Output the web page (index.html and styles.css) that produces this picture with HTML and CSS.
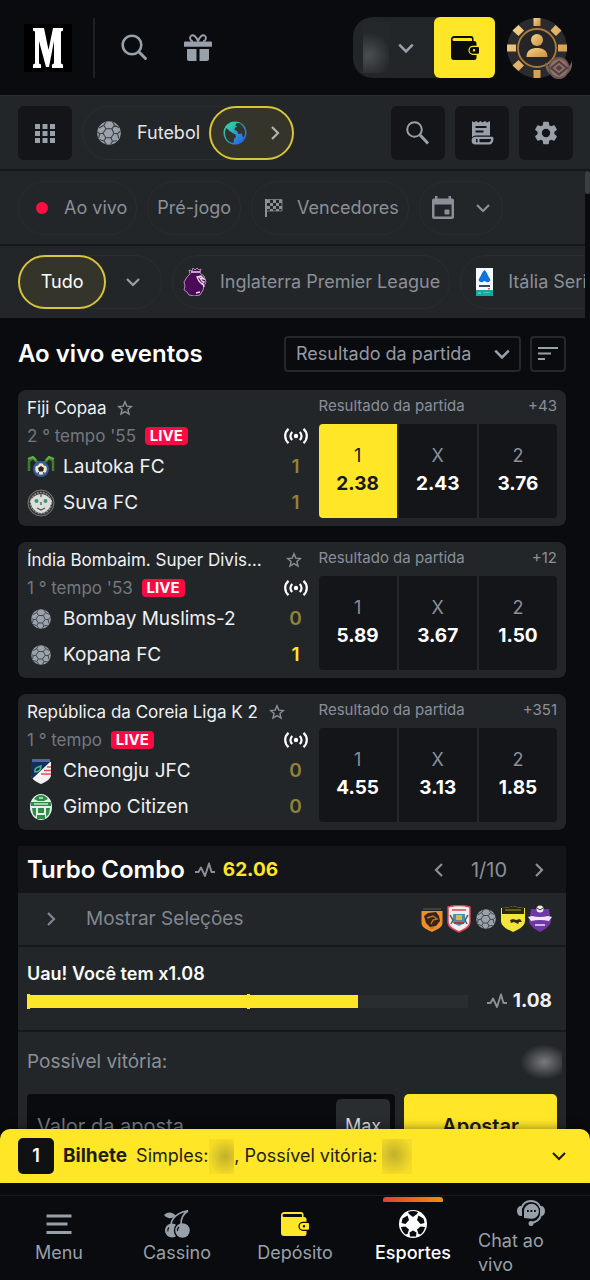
FILE: index.html
```html
<!DOCTYPE html>
<html lang="pt">
<head>
<meta charset="utf-8">
<meta name="viewport" content="width=device-width, initial-scale=1">
<title>Esportes - Ao vivo eventos</title>
<link rel="stylesheet" href="styles.css">
</head>
<body>
<svg class="defs" aria-hidden="true">
  <defs>
    <linearGradient id="gold" x1="0" y1="0" x2="1" y2="1"><stop offset="0" stop-color="#f6d58a"/><stop offset="1" stop-color="#c98e3e"/></linearGradient>
    <linearGradient id="earth" x1="0" y1="0" x2="1" y2="1"><stop offset="0" stop-color="#3fe08a"/><stop offset=".45" stop-color="#2aa9c8"/><stop offset="1" stop-color="#2a4cf0"/></linearGradient>
  </defs>
  <symbol id="down" viewBox="0 0 16 16"><path d="M2 5l6 6 6-6" fill="none" stroke="currentColor" stroke-width="2.200"/></symbol>
  <symbol id="right" viewBox="0 0 16 16"><path d="M5 2l6 6-6 6" fill="none" stroke="currentColor" stroke-width="2.200"/></symbol>
  <symbol id="left" viewBox="0 0 16 16"><path d="M11 2L5 8l6 6" fill="none" stroke="currentColor" stroke-width="2.200"/></symbol>
  <symbol id="star" viewBox="0 0 16 16"><path d="M8 1.800l1.800 4.300 4.600.4-3.500 3 1.100 4.500L8 11.600 4 14l1.100-4.500-3.500-3 4.600-.4z" fill="none" stroke="currentColor" stroke-width="1.400"/></symbol>
  <symbol id="ball" viewBox="0 0 24 24">
    <circle cx="12" cy="12" r="11.800" fill="#9ba2ac"/>
    <g fill="none" stroke="#3b4046" stroke-width="1.100" stroke-linejoin="round">
      <path d="M9 7.800h5.800l2.200 4.700-3.200 4.300H8.800l-2.900-4.600z"/>
      <path d="M9 7.800L6.800 4.300 2 7M6.800 4.300L9 .8M14.800 7.800l2.700-3.500L15.500 1M17.500 4.300l4.700 2.500M17 12.500l3.500.1 3-2.600M20.500 12.600l1.300 5M13.800 16.800l1.700 3.400 4.500-.4M15.500 20.200l-2 3.300M8.800 16.800l-1.900 3.200-4.400-1.500M6.900 20l2.500 3.300M5.900 12.200l-3.300.7L.4 10.500M2.600 12.900L1.800 17"/>
    </g>
  </symbol>
  <symbol id="cast" viewBox="0 0 24 16">
    <circle cx="12" cy="8" r="2.200" fill="currentColor"/>
    <path d="M8.300 4a5.200 5.200 0 0 0 0 8M15.700 4a5.200 5.200 0 0 1 0 8M4.500 .8a9.500 9.500 0 0 0 0 14.400M19.500 .8a9.500 9.500 0 0 1 0 14.400" fill="none" stroke="currentColor" stroke-width="2.200"/>
  </symbol>
  <symbol id="pulse" viewBox="0 0 20 16"><path d="M0 10h3.500L6 5.500l4 8.500L14 1.500 16.500 10H20" fill="none" stroke="currentColor" stroke-width="1.900" stroke-linejoin="round"/></symbol>
  <symbol id="wallet" viewBox="0 0 28 24">
    <path fill="currentColor" fill-rule="evenodd" d="M3.500 0H20a2.500 2.500 0 0 1 2.500 2.500V5H23a2.500 2.500 0 0 1 2.500 2.500v2.200H22a4.600 4.600 0 0 0 0 9.200h3.500v2.600A2.500 2.500 0 0 1 23 24H3a3 3 0 0 1-3-3V3.500A3.500 3.500 0 0 1 3.500 0zM3 2a1.500 1.500 0 0 0 0 3h18V3a1 1 0 0 0-1-1z"/>
    <path fill="currentColor" fill-rule="evenodd" d="M22 10.900h5a1 1 0 0 1 1 1v4.800a1 1 0 0 1-1 1h-5a3.400 3.400 0 0 1 0-6.800zm1 2.200a1.200 1.200 0 1 0 0 2.400 1.200 1.200 0 0 0 0-2.400z"/>
  </symbol>
</svg>

<div class="app">
  <header class="top">
    <a class="logo" href="#" aria-label="Início">
      <svg viewBox="0 0 48 48"><rect width="48" height="48" fill="#000"/><path fill="#fff" d="M9 4h11l4.500 22L29 4h10v2.500l-2 1v32l2 1V44H28v-3.500l2-1V17l-5 26h-3L15 17v22.500l2 1V44H9v-3.500l2-1v-32l-2-1z"/></svg>
    </a>
    <span class="rule"></span>
    <button class="bare" aria-label="Buscar"><svg class="i28" viewBox="0 0 28 28"><circle cx="12" cy="11" r="9.300" fill="none" stroke="currentColor" stroke-width="2.600"/><path d="M19 18l6.500 6.500" stroke="currentColor" stroke-width="3" stroke-linecap="round"/></svg></button>
    <button class="bare gift" aria-label="Promoções"><svg class="i28" viewBox="0 0 28 28"><path fill="currentColor" d="M0 8.500a1 1 0 0 1 1-1h26a1 1 0 0 1 1 1v4.200H0zM3 15h9.500v12H5a2 2 0 0 1-2-2zM15.500 15H25v10a2 2 0 0 1-2 2h-7.500z"/><path fill="none" stroke="currentColor" stroke-width="1.900" d="M14 7.500C12.500 2.500 9.500.7 7.600 1.500 5 2.700 6 7 9 7.500M14 7.500c1.500-5 4.500-6.800 6.400-6C23 2.700 22 7 19 7.500"/></svg></button>
    <div class="account">
      <button class="balance" aria-label="Saldo"><span class="smudge"></span><svg class="i18" aria-hidden="true"><use href="#down"/></svg></button>
      <button class="deposit" aria-label="Depositar"><svg viewBox="0 0 28 24"><use href="#wallet"/></svg></button>
    </div>
    <button class="avatar" aria-label="Perfil">
      <svg viewBox="0 0 66 64">
        <circle cx="31" cy="31" r="30" fill="#2b2b2d"/>
        <g fill="url(#gold)">
          <path d="M27.500 1h7v8h-7z"/>
          <path d="M27.500 53h7v8h-7zM1 27.500h9v7H1zM52 27.500h9v7h-9zM6.500 13.500L12.500 8l5.500 5.500-5.500 5.500zM49.500 8l6 5.500-5.500 5.500-5.500-5.500zM12.500 54l-6-5.500 6-5.500 5.500 5.500z"/>
        </g>
        <circle cx="31" cy="31" r="19" fill="#252527" stroke="#a97c3c" stroke-width="1.800"/>
        <circle cx="31" cy="23" r="6" fill="url(#gold)"/>
        <path d="M20.500 40c0-7 5-9 10.500-9s10.500 2 10.500 9z" fill="url(#gold)"/>
        <path d="M39 45c2 4 4 4 4 4s1-9 10-9 10 9 10 9 2-1 3-6c1 9-3 13-5 14-2 4-5 5-8 5s-6-1-8-4c-4-3-6-7-6-13z" fill="#79605b"/>
        <circle cx="53" cy="51" r="10.500" fill="#6a514e"/><circle cx="53" cy="51" r="9" fill="#8d716b"/>
        <path d="M53 44.500l8 6.500-8 6.500-8-6.500z" fill="none" stroke="#543f3e" stroke-width="2"/><path d="M53 48l3.500 3-3.500 3-3.500-3z" fill="#543f3e"/>
      </svg>
    </button>
  </header>

  <nav class="sports" aria-label="Modalidades">
    <button class="tile" aria-label="Todos"><svg class="i20" viewBox="0 0 20 20"><path fill="currentColor" d="M0 1h5v5H0zM7.500 1h5v5h-5zM15 1h5v5h-5zM0 8h5v5H0zM7.500 8h5v5h-5zM15 8h5v5h-5zM0 15h5v5H0zM7.500 15h5v5h-5zM15 15h5v5h-5z"/></svg></button>
    <div class="pill combo-pill">
      <button class="sport"><svg class="i24"><use href="#ball"/></svg>Futebol</button>
      <button class="region active" aria-label="Região"><svg class="i24" viewBox="0 0 24 24"><circle cx="12" cy="12" r="11.500" fill="url(#earth)"/><path fill="#35342a" d="M13 2.500c2-1 3.500-.500 5 .8 2.500 2 4 5 4 8.200 0 2-.6 3.800-1.600 5.300l-1.900-4.300-3 .5-1.500-3-2.500-1 .5-2.500 2.500-.5-2-1.500zM3.500 7l2.500 2.500L9.500 12l3 1.500.5 2.500-2 2-.5 4C5.500 21.500 2 17.500 2 12c0-1.900.6-3.600 1.500-5z"/></svg><svg class="i16"><use href="#right"/></svg></button>
    </div>
    <div class="tools">
      <button class="tile" aria-label="Pesquisar"><svg class="i24" viewBox="0 0 24 24"><circle cx="8.500" cy="8.500" r="7.300" fill="none" stroke="currentColor" stroke-width="2"/><path d="M14 14l8 8.500" stroke="currentColor" stroke-width="3"/></svg></button>
      <button class="tile" aria-label="Apostas"><svg class="i24" viewBox="0 0 24 24"><path fill="currentColor" fill-rule="evenodd" d="M2 0l2 1.500L6 0l2.300 1.500L10.500 0l2 1.500L15 0l2 1.500L20 0v14.500H5.500A4 4 0 0 0 2 16.500zM5.500 5v1.900h11V5zm0 4.500v1.900h8V9.500z"/><path fill="currentColor" fill-rule="evenodd" d="M5.500 15.700H22a1.500 1.500 0 0 1 1.500 1.500c0 3.800-1.500 6.300-4.500 6.300H5.500a3.900 3.900 0 0 1 0-7.800zM6 18v3.200h1.500V18zm3.500 0v3.200H19c1.300 0 2-1.500 2-3.200z"/></svg></button>
      <button class="tile" aria-label="Configurações"><svg class="i28" viewBox="0 0 24 24"><path fill="currentColor" d="M19.140 12.940c.040-.300.060-.610.060-.940 0-.320-.020-.640-.070-.940l2.030-1.580c.180-.140.230-.410.120-.610l-1.920-3.320c-.120-.220-.370-.290-.590-.220l-2.390.960c-.500-.380-1.030-.700-1.620-.940l-.360-2.540c-.040-.240-.240-.410-.480-.410h-3.840c-.240 0-.430.170-.470.410l-.360 2.540c-.590.240-1.130.570-1.620.940l-2.390-.960c-.220-.080-.470 0-.590.220L2.740 8.870c-.120.210-.080.470.120.610l2.030 1.580c-.050.300-.090.630-.090.940s.020.640.070.940l-2.030 1.580c-.180.140-.230.410-.120.610l1.920 3.320c.120.220.370.290.590.220l2.390-.960c.500.380 1.030.700 1.620.940l.360 2.540c.050.240.240.410.480.410h3.840c.240 0 .440-.170.470-.410l.360-2.540c.590-.240 1.130-.560 1.620-.940l2.390.960c.220.080.470 0 .590-.220l1.920-3.320c.120-.220.070-.470-.120-.610l-2.010-1.580zM12 15.600A3.600 3.600 0 1 1 12 8.400a3.600 3.600 0 0 1 0 7.200z"/></svg></button>
    </div>
  </nav>

  <main class="scroll">
    <span class="thumb"></span>
    <div class="filters">
      <button class="pill"><span class="dot"></span><span>Ao vivo</span></button>
      <button class="pill">Pré-jogo</button>
      <button class="pill flagpill"><svg class="i20" viewBox="0 0 20 20"><path fill="currentColor" d="M1 1h2v18H1zM3 2h3v3H3zM9 2h3v3H9zM15 2h3v3h-3zM6 5h3v3H6zM12 5h3v3h-3zM3 8h3v3H3zM9 8h3v3H9zM15 8h3v3h-3zM6 11h3v2H6zM12 11h3v2h-3z"/><path fill="none" stroke="currentColor" stroke-width=".8" d="M3 1.500h15v11.500H3"/></svg>Vencedores</button>
      <button class="pill calpill" aria-label="Data"><svg class="i24" viewBox="0 0 24 24"><path fill="currentColor" fill-rule="evenodd" d="M4 0h2.500v2.500h11V0H20v2.500h1a2 2 0 0 1 2 2V21a2 2 0 0 1-2 2H3a2 2 0 0 1-2-2V4.500a2 2 0 0 1 2-2h1zM3.500 8.500V20.500h17v-12z"/><rect x="13.500" y="13.500" width="5" height="5" rx="1" fill="currentColor"/></svg><svg class="i16"><use href="#down"/></svg></button>
    </div>
    <div class="filters leagues">
      <div class="pill all-pill"><button class="all active">Tudo</button><button class="more" aria-label="Mais"><svg class="i16"><use href="#down"/></svg></button></div>
      <button class="pill league"><svg class="i28" viewBox="0 0 28 28"><path d="M7 6l-1-4 3 1 1-3 2 2 2-2 2 2 2-1-1 4 4 3 2 6-2 4-1 4-3 5-6 1-5-1-2-3-3-2 1-4-1-4 3-5z" fill="#4b0a58" stroke="#b99bc0" stroke-width=".9"/><path d="M8 4h9M14 9l4-1 3 3-4-1 2 3 2 1-2 2-3-3zM20 16l1 3M13 25l4-1" fill="none" stroke="#ecd7ee" stroke-width="1.300"/></svg>Inglaterra Premier League</button>
      <button class="pill league"><svg class="i28" viewBox="0 0 28 28"><path fill="#f7fafc" d="M5 0h17v28H5z"/><path fill="#1172dc" d="M13.500 2c3 3 3 5 5 8 2 2 0 5-3 4l-2-1-2 1c-3 1-5-2-3-4 2-3 2-5 5-8z"/><path fill="#2c4a70" d="M8 17h11v2H8z"/><path fill="#18a7a3" d="M5 22h17v6H5z"/><path fill="#45c9b5" d="M7 24h3v2H7zm5 0h7v1h-7z"/><path fill="#e35b62" d="M17 20h2v1.500h-2z"/></svg>Itália Serie A</button>
    </div>

    <div class="content">
      <div class="heading">
        <h1>Ao vivo eventos</h1>
        <label class="market"><select aria-label="Mercado"><option>Resultado da partida</option></select><svg class="i18"><use href="#down"/></svg></label>
        <button class="sort" aria-label="Ordenar"><svg class="i20" viewBox="0 0 20 20"><path d="M0 4h20M0 9.500h13M0 15h7" stroke="currentColor" stroke-width="2.200"/></svg></button>
      </div>

      <article class="card">
        <div class="match">
          <div class="line name"><h2>Fiji Copaa</h2><button class="fav" aria-label="Favorito"><svg class="i16"><use href="#star"/></svg></button></div>
          <div class="line time">2 ° tempo '55 <b class="live">LIVE</b><svg class="cast"><use href="#cast"/></svg></div>
          <div class="team"><svg class="i28" viewBox="0 0 28 28"><path d="M2 18V8l4-3 5 5M26 18V8l-4-3-5 5" fill="none" stroke="#3d7d2c" stroke-width="2.500"/><path d="M1 6l5-2 3 3M27 6l-5-2-3 3" fill="none" stroke="#63ad42" stroke-width="2"/><circle cx="14" cy="16" r="8" fill="#315d9b"/><circle cx="14" cy="16" r="5.800" fill="#eee9d2"/><path d="M14 13l3 2-1 3.500h-4L11 15zM9 13l2-2 1 1zM19 13l-2-2-1 1zM10 20l2-1v2zM18 20l-2-1v2z" fill="#252525"/></svg><span>Lautoka FC</span><b class="dim">1</b></div>
          <div class="team"><svg class="i28" viewBox="0 0 28 28"><circle cx="14" cy="14" r="13" fill="#333536" stroke="#777" stroke-width="1"/><circle cx="14" cy="14" r="10.500" fill="none" stroke="#8a8a88" stroke-width="1.500" stroke-dasharray="2 1"/><path d="M3 12q5-7 11-7t11 7l-2 6q-4 6-9 6t-9-6z" fill="#dcdedb"/><circle cx="9.500" cy="12" r="2" fill="#3b9a6c"/><circle cx="18.500" cy="12" r="2" fill="#3b9a6c"/><path d="M14 5v3M14 13v3M10 19l4 2 4-2" fill="none" stroke="#555" stroke-width="1.300"/></svg><span>Suva FC</span><b class="dim">1</b></div>
        </div>
        <div class="bet">
          <div class="line market-name"><span>Resultado da partida</span><a href="#">+43</a></div>
          <div class="odds"><button class="picked"><span>1</span><b>2.38</b></button><button><span>X</span><b>2.43</b></button><button><span>2</span><b>3.76</b></button></div>
        </div>
      </article>

      <article class="card">
        <div class="match">
          <div class="line name spread"><h2>Índia Bombaim. Super Division</h2><button class="fav" aria-label="Favorito"><svg class="i16"><use href="#star"/></svg></button></div>
          <div class="line time">1 ° tempo '53 <b class="live">LIVE</b><svg class="cast"><use href="#cast"/></svg></div>
          <div class="team"><svg class="small"><use href="#ball"/></svg><span>Bombay Muslims-2</span><b class="dim">0</b></div>
          <div class="team"><svg class="small"><use href="#ball"/></svg><span>Kopana FC</span><b>1</b></div>
        </div>
        <div class="bet">
          <div class="line market-name"><span>Resultado da partida</span><a href="#">+12</a></div>
          <div class="odds"><button><span>1</span><b>5.89</b></button><button><span>X</span><b>3.67</b></button><button><span>2</span><b>1.50</b></button></div>
        </div>
      </article>

      <article class="card">
        <div class="match">
          <div class="line name"><h2>República da Coreia Liga K 2</h2><button class="fav" aria-label="Favorito"><svg class="i16"><use href="#star"/></svg></button></div>
          <div class="line time">1 ° tempo <b class="live">LIVE</b><svg class="cast"><use href="#cast"/></svg></div>
          <div class="team"><svg class="i28" viewBox="0 0 28 28"><path d="M4 5h20v13c0 4-5 7-10 9-5-2-10-5-10-9z" fill="#f3f1f3"/><path d="M4 5h19L5 22c-1-2-1-3-1-4z" fill="#142c5f"/><path d="M5 2h18v3H5z" fill="#50689c"/><path d="M20 10h4M17 13.500h7M14 17h10" stroke="#e84b54" stroke-width="1.700"/><path d="M8 13c0-3 4-3 6-4 0 4-2 6-6 6z" fill="none" stroke="#46b878" stroke-width="1.600"/></svg><span>Cheongju JFC</span><b class="dim">0</b></div>
          <div class="team"><svg class="i28" viewBox="0 0 28 28"><ellipse cx="14" cy="14" rx="11" ry="13" fill="#e4f2e6"/><path d="M14 2a10 12 0 0 1 7 4l-4 2h-6L7 6a10 12 0 0 1 7-4zM4 9h20v4H4zM5 15h4v9l-3-3zM11 15h6v5h-6zM19 15h4l-1 6-3 3zM10 22h8v4h-8z" fill="#2d8c47"/><path d="M7 11h14M12 5h4" stroke="#c5e6cd" stroke-width="1.500"/></svg><span>Gimpo Citizen</span><b class="dim">0</b></div>
        </div>
        <div class="bet">
          <div class="line market-name"><span>Resultado da partida</span><a href="#">+351</a></div>
          <div class="odds"><button><span>1</span><b>4.55</b></button><button><span>X</span><b>3.13</b></button><button><span>2</span><b>1.85</b></button></div>
        </div>
      </article>

      <section class="turbo">
        <header class="turbo-head">
          <h2>Turbo Combo</h2><svg class="pulse"><use href="#pulse"/></svg><b>62.06</b>
          <div class="pager"><button aria-label="Anterior"><svg class="i16"><use href="#left"/></svg></button><span>1/10</span><button aria-label="Próximo"><svg class="i16"><use href="#right"/></svg></button></div>
        </header>
        <button class="show">
          <svg class="i16"><use href="#right"/></svg><span>Mostrar Seleções</span>
          <span class="crests">
            <i><svg class="i28" viewBox="0 0 28 28"><path d="M5 3h18v2H5z" fill="#42403e"/><path d="M3.500 6h21v12c0 5-7 7-10.500 9-3.500-2-10.500-4-10.500-9z" fill="#f08e2a"/><path d="M6 11l4-3 8-1 3 4 1 5-4 5-6 1-4-4z" fill="#33251d"/><path d="M9 13l6-2 4 3-4 1-2 4M12 23h4" fill="none" stroke="#c4731f" stroke-width="1.400"/></svg></i>
            <i><svg class="i28" viewBox="0 0 28 28"><path d="M3 2q11-3 22 0v15c0 6-7 8-11 10-4-2-11-4-11-10z" fill="#f2eef0" stroke="#d44452" stroke-width="1.500"/><path d="M7 5h14" stroke="#d44452" stroke-width="1.500"/><path d="M8 9h12v9l-6 3-6-3z" fill="#4b91ab"/><path d="M11 10h6v5h-6z" fill="#d9b843"/><path d="M5 10l3 5-2 4M23 10l-3 5 2 4" stroke="#565c66" stroke-width="1.500" fill="none"/><path d="M9 17h10v2H9z" fill="#b53540"/></svg></i>
            <i><svg class="small"><use href="#ball"/></svg></i>
            <i><svg class="i28" viewBox="0 0 28 28"><path d="M2 3q6 0 12-2 6 2 12 2v13c0 6-8 9-12 11C10 25 2 22 2 16z" fill="#f3e539"/><path d="M3 3q6 0 11-2 5 2 11 2v6H3z" fill="#272613"/><path d="M6 5h16" stroke="#9d9329" stroke-width="1"/><path d="M11 15l3-1 3 1 4-1 2 3h-3l-1 2-4-2-3 1z" fill="#2d2b16"/></svg></i>
            <i><svg class="i28" viewBox="0 0 28 28"><path d="M5 4h18l2 13c-2 5-7 8-11 10-4-2-9-5-11-10z" fill="#6f38a4"/><circle cx="14" cy="4" r="3.500" fill="#eee"/><path d="M11 3l3 2 3-2" stroke="#333" fill="none"/><path d="M2 12l4-1q8 2 16 0l4 1-3 4q-9-2-18 0z" fill="#eee7f4"/><path d="M9 20h10" stroke="#d0b8e5" stroke-width="2"/></svg></i>
          </span>
        </button>
        <div class="boost">
          <strong>Uau! Você tem x1.08</strong>
          <div class="boost-row">
            <div class="bar" role="progressbar" aria-label="Bônus" aria-valuenow="75"><span class="fill" style="width:75%"></span><span class="tick"></span><span class="tick"></span></div>
            <svg class="pulse"><use href="#pulse"/></svg><b>1.08</b>
          </div>
        </div>
        <div class="stake">
          <div class="win"><span>Possível vitória:</span><span class="smudge"></span></div>
          <div class="form">
            <div class="field"><input type="text" placeholder="Valor da aposta" aria-label="Valor da aposta"><button>Max</button></div>
            <button class="place">Apostar</button>
          </div>
        </div>
      </section>
    </div>
  </main>

  <button class="ticket">
    <span class="count">1</span><b>Bilhete</b>
    <span class="info">Simples:<span class="smudge s1"></span>, Possível vitória:<span class="smudge s2"></span></span>
    <svg class="i16"><use href="#down"/></svg>
  </button>

  <nav class="tabs" aria-label="Principal">
    <a href="#"><svg class="i28" viewBox="0 0 28 28"><path d="M1.500 6h25M1.500 14h21M1.500 22.500h25" stroke="currentColor" stroke-width="2.800"/></svg><span>Menu</span></a>
    <a href="#"><svg class="i28" viewBox="0 0 28 28"><circle cx="9" cy="20.500" r="7" fill="currentColor"/><circle cx="19.500" cy="20.500" r="8" fill="currentColor" stroke="#090b0f" stroke-width="1.400"/><path d="M1 5c4-4 9-3 12 1-4 3-9 3-12-1z" fill="currentColor"/><path d="M8 14c1-6 7-12 17-13-5 3-7 7-7 13M25 1l-6 1" fill="none" stroke="currentColor" stroke-width="1.600"/><path d="M6 17.500q-2 2-1 4M16 17q-2 2-1.500 4" stroke="#090b0f" stroke-width="1.200" fill="none"/></svg><span>Cassino</span></a>
    <a href="#"><svg class="i28 yellow" viewBox="0 0 28 28"><g transform="translate(0 2)"><use href="#wallet" width="28" height="24"/></g></svg><span>Depósito</span></a>
    <a href="#" class="current"><svg class="i28" viewBox="0 0 28 28"><circle cx="14" cy="14" r="14" fill="#fff"/><g fill="#090b0f"><path d="M10 4l-1-2q5-2 10 0l-1 2-4 3zM3.500 8.500l5-3 1.500 4.500-3.500 4-4-1zM24.500 8.500l-5-3L18 10l3.500 4 4-1zM2 17l4.500-.5 3.500 3L8.500 24l-2 .5Q3 22 2 17zM26 17l-4.500-.5-3.500 3 1.500 4.500 2 .5Q25 22 26 17z"/><path d="M10.500 22.500l3.500-2 3.500 2-.5 4h-6z"/></g></svg><span>Esportes</span></a>
    <a href="#" class="chat"><svg class="i28" viewBox="0 0 28 28"><path d="M7 18V10.500a7.500 7.500 0 1 1 7 8.300z" fill="currentColor"/><path d="M4.500 8a10 10 0 0 1 19 0M24 15c-1 4-4 7-10 8" fill="none" stroke="currentColor" stroke-width="2"/><path d="M5 6v10H4c-2.500 0-4-2-4-5s1.500-5 4-5zM23 6v10h1c2.500 0 4-2 4-5s-1.500-5-4-5z" fill="currentColor"/><circle cx="14" cy="23.500" r="2.500" fill="currentColor"/><path d="M10 11h1.800M13.500 11h1.800M17 11h1.800" stroke="#090b0f" stroke-width="1.800"/></svg><span>Chat ao<br>vivo</span></a>
  </nav>
</div>
</body>
</html>
```
FILE: styles.css
```css
:root {
  --bg: #090b0f;
  --panel: #222629;
  --dark: #131518;
  --edge: #16191c;
  --line: #303338;
  --yellow: #ffe627;
  --muted: #8b8f98;
  --icon: #98a0aa;
}
* { box-sizing: border-box; }
body { margin: 0; background: var(--bg); color: #f0f1f2; font: 400 18px/24px Inter, "Liberation Sans", sans-serif; }
button { border: 0; background: none; padding: 0; color: inherit; font: inherit; display: flex; align-items: center; justify-content: center; }
a { color: inherit; text-decoration: none; }
h1, h2 { margin: 0; font-weight: 400; }
svg { display: block; flex: none; }
.defs { position: absolute; width: 0; height: 0; }
.i16 { width: 16px; height: 16px; }
.i18 { width: 18px; height: 18px; }
.i20 { width: 20px; height: 20px; }
.i24 { width: 24px; height: 24px; }
.i28 { width: 28px; height: 28px; }
.small { width: 20px; height: 20px; margin: 0 4px; }

.app { display: flex; flex-direction: column; height: 100vh; overflow: hidden; }

.top { flex: none; display: flex; align-items: center; height: 96px; padding: 0 20px 0 24px; border-bottom: 1px solid #292c30; color: var(--icon); }
.logo svg { width: 48px; height: 48px; }
.rule { width: 2px; height: 60px; margin: 0 25px 0 21px; background: #1d2024; }
.gift { margin-left: 36px; }
.account { display: flex; margin-left: auto; border-radius: 20px 8px 8px 20px; background: var(--panel); }
.balance { width: 81px; height: 61px; justify-content: space-between; padding: 0 19px 0 10px; }
.balance .smudge { width: 26px; height: 50px; background: radial-gradient(circle at 20% 65%, #4c4f52, #24282b 60%); }
.deposit { width: 61px; height: 61px; border-radius: 6px; background: var(--yellow); color: #0b0c0e; }
.deposit svg { width: 28px; height: 24px; }
.avatar { margin: 2px 0 0 11px; }
.avatar svg { width: 66px; height: 64px; margin-right: -2px; }

.sports { flex: none; display: flex; align-items: center; gap: 10px; height: 75px; padding: 0 17px 0 18px; background: var(--panel); border-bottom: 2px solid var(--edge); }
.tile { width: 54px; height: 54px; border-radius: 6px; background: var(--dark); color: var(--icon); }
.tools { display: flex; gap: 10px; margin-left: auto; }
.pill { flex: none; height: 54px; border: 1px solid #292d30; border-radius: 27px; color: var(--muted); white-space: nowrap; }
.combo-pill { display: flex; }
.sport { gap: 16px; padding: 0 10px 0 14px; color: #e4e5e7; }
.active { height: 54px; margin: -1px; border: 2px solid #d8c53a; border-radius: 27px; background: #35342a; }
.region { width: 85px; gap: 20px; padding-left: 2px; color: #b4b3ae; }

.scroll { position: relative; flex: 1; min-height: 0; overflow: hidden; padding-right: 5px; }
.thumb { position: absolute; top: 0; right: 0; width: 5px; height: 23px; border-radius: 2px; background: #3b3f42; }
.filters { display: flex; align-items: center; gap: 10px; height: 75px; padding: 0 18px; overflow: hidden; background: var(--panel); border-bottom: 2px solid var(--edge); }
.leagues { height: 72px; border: 0; }
.filters > .pill { padding: 0 9px; }
.dot { width: 12px; height: 12px; margin: 0 16px 0 8px; border-radius: 50%; background: #ff0c40; }
.filters > .flagpill { gap: 13px; padding-left: 12px; }
.filters > .calpill { width: 84px; gap: 20px; }
.filters > .all-pill { display: flex; width: 144px; padding: 0; }
.all { width: 89px; color: #fff; }
.more { width: 56px; color: var(--icon); }
.filters > .league { gap: 9px; padding-left: 10px; }

.content { padding: 18px 19px 0 18px; }
.heading { display: flex; align-items: center; height: 36px; margin-bottom: 18px; }
h1 { flex: 1; font-size: 24px; line-height: 30px; font-weight: 600; color: #fff; }
.market { position: relative; display: flex; align-items: center; }
.market select { appearance: none; width: 237px; height: 36px; padding: 0 32px 0 10px; border: 2px solid #24272b; border-radius: 4px; background: transparent; color: #969aa3; font: inherit; }
.market svg { position: absolute; right: 10px; color: var(--icon); pointer-events: none; }
.sort { width: 36px; height: 36px; margin-left: 9px; border: 2px solid #24272b; border-radius: 4px; color: var(--icon); }

.card { display: flex; gap: 11px; margin-bottom: 16px; padding: 5px 9px 8px; border-radius: 8px; background: var(--panel); }
.match { flex: 1; min-width: 0; }
.line { display: flex; align-items: center; }
.name { height: 26px; gap: 11px; }
.name h2 { overflow: hidden; text-overflow: ellipsis; white-space: nowrap; font-size: 17px; line-height: 24px; }
.spread { justify-content: space-between; padding-right: 6px; }
.spread h2 { padding-right: 12px; }
.fav { color: var(--muted); }
.time { height: 30px; font-size: 17px; color: #747880; white-space: pre; }
.live { margin-left: 4px; padding: 0 5px; border-radius: 4px; background: #f90b42; color: #fff; font-size: 15px; line-height: 18px; }
.cast { width: 24px; height: 16px; margin-left: auto; color: #fff; }
.team { display: flex; align-items: center; height: 31px; font-size: 19px; }
.team + .team { margin-top: 5px; }
.team span { flex: 1; margin-left: 8px; }
.team b { width: 24px; text-align: center; font-weight: 600; color: var(--yellow); }
.team .dim { color: #908338; }
.bet { flex: none; width: 45%; }
.market-name { height: 22px; justify-content: space-between; margin-bottom: 7px; font-size: 15px; color: var(--muted); }
.odds { display: grid; grid-template-columns: repeat(3, 1fr); gap: 2px; height: 94px; overflow: hidden; border-radius: 4px; background: #25282b; }
.odds button { flex-direction: column; gap: 4px; padding-bottom: 3px; background: var(--dark); color: var(--muted); }
.odds b { color: #fff; font-size: 19px; }
.odds .picked, .odds .picked b { color: #17181a; }
.odds .picked { background: var(--yellow); }

.turbo { background: var(--panel); }
.turbo-head { display: flex; align-items: center; height: 47px; padding: 0 9px; background: var(--dark); }
.turbo-head h2 { font-size: 24px; font-weight: 600; color: #fff; }
.pulse { width: 20px; height: 16px; color: var(--muted); }
.turbo-head .pulse { margin: 0 8px 0 10px; }
.turbo-head b { font-size: 19px; color: var(--yellow); }
.pager { display: flex; align-items: center; gap: 24px; margin-left: auto; padding-right: 10px; font-size: 20px; color: var(--muted); }
.show { width: 100%; height: 54px; padding: 0 13px 0 25px; border-bottom: 2px solid var(--edge); font-size: 19px; color: #838790; }
.show > span:nth-of-type(1) { margin-left: 27px; }
.crests { display: flex; margin-left: auto; }
.crests i { display: flex; align-items: center; width: 27px; justify-content: center; }
.boost { height: 85px; padding: 15px 14px 0 9px; border-bottom: 2px solid var(--edge); }
.boost strong { display: block; font-weight: 600; color: #fbfbf4; }
.boost-row { display: flex; align-items: center; margin-top: 3px; font-size: 19px; }
.boost-row .pulse { margin: 0 6px 0 19px; }
.bar { position: relative; flex: 1; height: 13px; background: #2a2d30; }
.fill { display: block; height: 13px; background: var(--yellow); }
.tick { position: absolute; top: -1px; left: 0; width: 3px; height: 15px; background: var(--yellow); }
.tick + .tick { left: 50%; }
.stake { padding: 12px 9px; color: var(--muted); }
.win { display: flex; align-items: center; justify-content: space-between; height: 36px; margin-bottom: 14px; font-size: 19px; }
.win .smudge { width: 44px; height: 38px; margin-right: -5px; background: radial-gradient(ellipse at 60% 50%, #797a7c, #222629 65%); }
.form { display: flex; gap: 9px; height: 63px; }
.field { flex: 1; min-width: 0; display: flex; padding: 5px; border-radius: 4px; background: var(--bg); }
.field input { flex: 1; min-width: 0; padding: 0 5px; border: 0; background: transparent; color: #fff; font: inherit; font-size: 20px; }
.field input::placeholder { color: #767a82; opacity: 1; }
.field button { width: 54px; border-radius: 5px; background: #292d30; color: #d5d6d8; }
.place { width: 153px; border-radius: 5px; background: var(--yellow); color: #17181a; font-size: 20px; font-weight: 600; }

.ticket { flex: none; position: relative; justify-content: flex-start; height: 54px; padding: 0 23px 0 18px; border-radius: 10px 10px 0 0; background: var(--yellow); color: #1d1d12; box-shadow: 0 -2px 8px rgba(0, 0, 0, .35); }
.count { width: 36px; line-height: 36px; margin-right: 9px; border-radius: 5px; background: #101113; color: #fff; font-weight: 600; }
.ticket b { margin-right: 9px; font-size: 19px; }
.info { display: flex; align-items: center; white-space: pre; }
.s1, .s2 { width: 25px; height: 35px; margin-left: 1px; background: radial-gradient(ellipse at 65% 50%, #c2b02c, #f5dc27 75%); }
.s2 { width: 30px; margin-left: 4px; background: radial-gradient(ellipse at 40% 45%, #c2b02c, #f5dc27 75%); }
.ticket > svg { margin-left: auto; }

.tabs { flex: none; display: grid; grid-template-columns: repeat(5, 1fr); height: 85px; margin-top: 12px; border-top: 1px solid #181b1f; color: var(--icon); }
.tabs a { position: relative; display: flex; flex-direction: column; align-items: center; gap: 3px; padding: 14px 6px 0; }
.tabs .yellow { color: var(--yellow); }
.tabs .current { color: #fff; font-weight: 500; }
.current::before { content: ""; position: absolute; top: 1px; width: 60px; height: 5px; border-radius: 3px 3px 1px 1px; background: linear-gradient(90deg, #dc4526, #f58a12); }
.tabs .chat { gap: 0; padding-top: 4px; }
.chat span { align-self: stretch; padding-top: 1px; }
```
